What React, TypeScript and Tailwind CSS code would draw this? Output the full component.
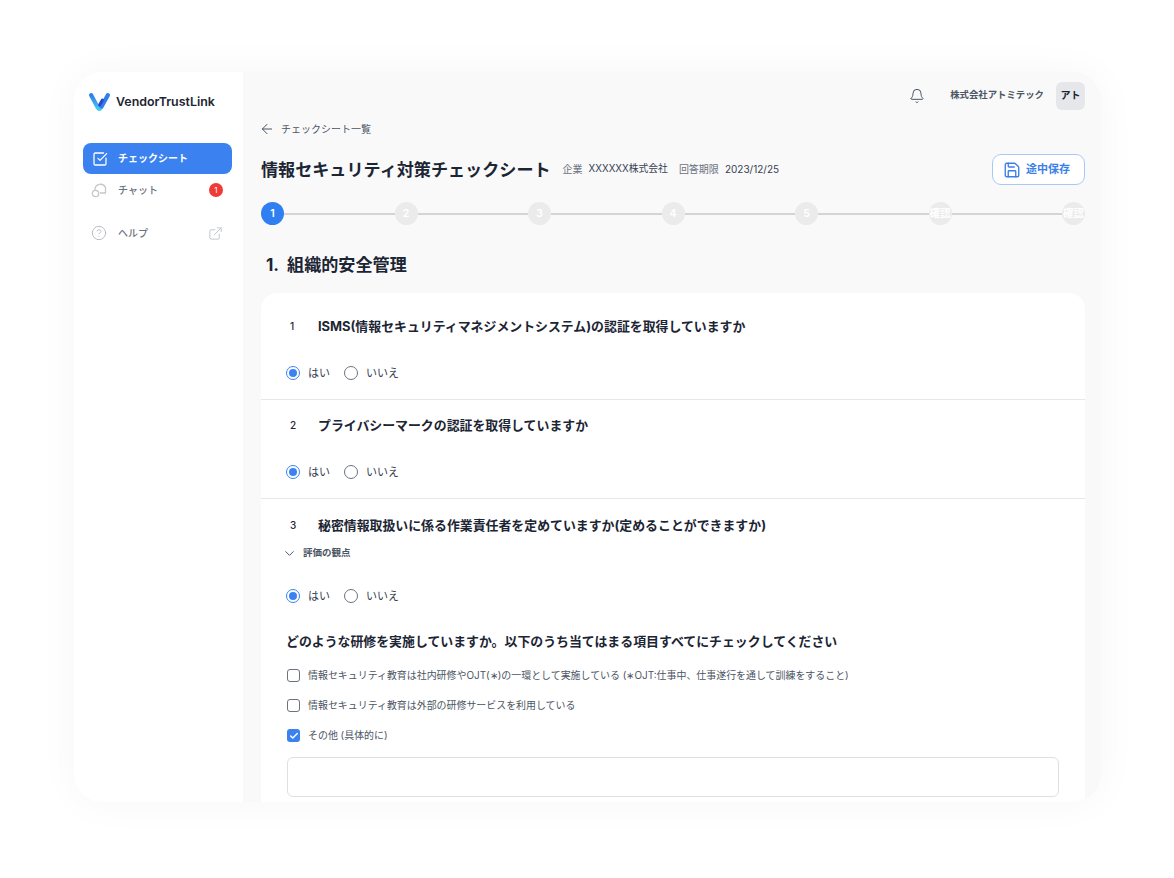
import { ArrowLeft, Bell, Check, ChevronDown, CircleHelp, ExternalLink, Save, SquareCheckBig } from "lucide-react";

const font = { fontFamily: '"Inter", "Noto Sans CJK JP", sans-serif' };

const steps = ["1", "2", "3", "4", "5", "確認", "確認"];

function Logo() {
  return (
    <svg width="21" height="19" viewBox="0 0 21 19" fill="none">
      <defs>
        <linearGradient id="vLeft" x1="0" y1="0" x2="0" y2="1">
          <stop offset="0" stopColor="#2f7fe8" />
          <stop offset="1" stopColor="#45c8f0" />
        </linearGradient>
      </defs>
      <path d="M2.2 2.2 L8.8 14.6 Q10.3 17 11.8 14.6" stroke="url(#vLeft)" strokeWidth="4.2" strokeLinecap="round" />
      <path d="M18.8 2.2 L12.6 13.4" stroke="#2f7fe8" strokeWidth="4.2" strokeLinecap="round" />
      <path d="M13.4 7 L10.6 12" stroke="#2a46d0" strokeWidth="3" strokeLinecap="round" />
    </svg>
  );
}

function ChatIcon() {
  return (
    <svg width="16" height="16" viewBox="0 0 16 16" fill="none" stroke="#c4c7cc" strokeWidth="1.3" strokeLinejoin="round">
      <path d="M4 8 A5.5 5.5 0 0 1 14.5 5.5 V11 H9" />
      <circle cx="4.5" cy="11.5" r="3.2" />
    </svg>
  );
}

function Radio({ label, checked }: { label: string; checked?: boolean }) {
  return (
    <div className="flex items-center gap-[8px]">
      <span className={`flex h-[14px] w-[14px] items-center justify-center rounded-full border ${checked ? "border-[#3b82f0]" : "border-[#6b7280]"} bg-white`}>
        {checked && <span className="h-2 w-2 rounded-full bg-[#3b82f0]" />}
      </span>
      <span className="text-[11px] text-[#374151]">{label}</span>
    </div>
  );
}

function YesNo() {
  return (
    <div className="flex items-center gap-[14px]">
      <Radio label="はい" checked />
      <Radio label="いいえ" />
    </div>
  );
}

function CheckRow({ label, checked }: { label: string; checked?: boolean }) {
  return (
    <div className="ml-[1px] flex h-5 items-center gap-[8px]">
      {checked ? (
        <span className="flex h-[13px] w-[13px] items-center justify-center rounded-[3px] bg-[#3b82f0]">
          <Check size={10} strokeWidth={3.5} className="text-white" />
        </span>
      ) : (
        <span className="h-[13px] w-[13px] rounded-[3px] border border-[#6b7280] bg-white" />
      )}
      <span className="text-[9.95px] text-[#4b5563]">{label}</span>
    </div>
  );
}

function Question({ no, title }: { no: number; title: string }) {
  return (
    <div className="flex items-center">
      <span className="w-[32px] pl-[4px] text-[10px] font-medium text-[#1c2533]">{no}</span>
      <h3 className="text-[12.9px] font-bold text-[#1c2533]">{title}</h3>
    </div>
  );
}

export default function App() {
  return (
    <div className="h-[878px] w-[1174px] overflow-hidden bg-white pl-[74px] pt-[72px]" style={font}>
      <div className="flex h-[730px] w-[1027px] overflow-hidden rounded-[28px] bg-[#f9f9fa] shadow-[0_0_40px_rgba(0,0,0,0.04)]">
        {/* Sidebar */}
        <aside className="w-[169px] shrink-0 bg-white px-[9px]">
          <div className="flex items-center gap-[6px] pl-[6px] pt-[21px]">
            <Logo />
            <span className="text-[12.4px] font-semibold text-[#1c2533]">VendorTrustLink</span>
          </div>
          <div className="mt-[31px] flex h-[31px] w-[149px] items-center gap-[10px] rounded-[8px] bg-[#3b82f0] pl-[9px] text-white">
            <SquareCheckBig size={16} strokeWidth={1.9} />
            <span className="text-[10px] font-bold">チェックシート</span>
          </div>
          <div className="flex h-[32px] w-[149px] items-center gap-[11px] pl-[8px]">
            <ChatIcon />
            <span className="text-[10px] font-medium text-[#6b7280]">チャット</span>
            <span className="ml-auto mr-[9px] flex h-[14px] w-[14px] items-center justify-center rounded-full bg-[#ef3b36] text-[8px] text-white">1</span>
          </div>
          <div className="mt-[11px] flex h-[32px] w-[149px] items-center gap-[11px] pl-[8px]">
            <CircleHelp size={16} strokeWidth={1.4} className="text-[#b5b8be]" />
            <span className="text-[10px] font-medium text-[#6b7280]">ヘルプ</span>
            <ExternalLink size={15} strokeWidth={1.6} className="ml-auto mr-[9px] text-[#c4c7cc]" />
          </div>
        </aside>

        {/* Main */}
        <main className="flex-1 pl-[18px] pr-[16px]">
          <div className="flex h-[47px] items-center justify-end">
            <Bell size={16} strokeWidth={1.5} className="text-[#4b5563]" />
            <span className="ml-[25px] text-[9.4px] font-semibold text-[#4b5563]">株式会社アトミテック</span>
            <span className="ml-[12px] flex h-[28px] w-[29px] items-center justify-center rounded-[6px] bg-[#e5e7eb] text-[10px] font-bold text-[#1c2533]">アト</span>
          </div>

          <div className="mt-[1px] flex h-[18px] items-center gap-[6px]">
            <ArrowLeft size={16} strokeWidth={1.5} className="-ml-[2px] text-[#4b5563]" />
            <span className="text-[10px] text-[#4b5563]">チェックシート一覧</span>
          </div>

          <div className="mt-[16px] flex h-[31px] items-center">
            <h1 className="text-[17.1px] font-bold text-[#1c2533]">情報セキュリティ対策チェックシート</h1>
            <span className="ml-[12px] text-[10px] text-[#6b7280]">企業</span>
            <span className="ml-[6px] text-[9.8px] text-[#374151]">XXXXXX株式会社</span>
            <span className="ml-[11px] text-[10px] text-[#6b7280]">回答期限</span>
            <span className="ml-[6px] text-[10px] text-[#374151]">2023/12/25</span>
            <button className="ml-auto flex h-[31px] w-[93px] items-center gap-[5px] rounded-[9px] border border-[#a9c8f5] bg-white pl-[10px] text-[11px] font-bold text-[#3b7fe8]">
              <Save size={18} strokeWidth={1.8} />
              途中保存
            </button>
          </div>

          {/* Stepper */}
          <div className="mt-[17px] flex items-center">
            {steps.map((s, i) => (
              <div key={i} className={`flex items-center ${i > 0 ? "flex-1" : ""}`}>
                {i > 0 && <div className="h-[2px] flex-1 bg-[#d4d4d8]" />}
                <span className={`flex h-[23px] w-[23px] shrink-0 items-center justify-center whitespace-nowrap rounded-full text-[10.5px] font-semibold ${i === 0 ? "bg-[#2f7ff0] text-white" : "bg-[#ebebeb] text-white"}`}>
                  {s}
                </span>
              </div>
            ))}
          </div>

          <h2 className="mt-[27px] flex gap-[8px] pl-[5px] text-[17.1px] font-bold text-[#1c2533]">
            <span>1.</span>
            <span>組織的安全管理</span>
          </h2>

          {/* Card */}
          <div className="mt-[15px] h-[600px] rounded-t-[16px] bg-white">
            <div className="h-[107px] border-b border-[#e5e7eb] px-[25px] pt-[24px]">
              <Question no={1} title="ISMS(情報セキュリティマネジメントシステム)の認証を取得していますか" />
              <div className="mt-[29px]"><YesNo /></div>
            </div>
            <div className="h-[99px] border-b border-[#e5e7eb] px-[25px] pt-[16px]">
              <Question no={2} title="プライバシーマークの認証を取得していますか" />
              <div className="mt-[29px]"><YesNo /></div>
            </div>
            <div className="px-[25px] pt-[17px]">
              <Question no={3} title="秘密情報取扱いに係る作業責任者を定めていますか(定めることができますか)" />
              <div className="-ml-[4px] mt-[11px] flex items-center gap-[6px] text-[9.5px] font-semibold text-[#4b5563]">
                <ChevronDown size={15} strokeWidth={1.6} />
                評価の観点
              </div>
              <div className="mt-[27px]"><YesNo /></div>
              <h3 className="mt-[27px] text-[12.9px] font-bold text-[#1c2533]">どのような研修を実施していますか。以下のうち当てはまる項目すべてにチェックしてください</h3>
              <div className="mt-[15px] flex flex-col gap-[10px]">
                <CheckRow label="情報セキュリティ教育は社内研修やOJT(∗)の一環として実施している (∗OJT:仕事中、仕事遂行を通して訓練をすること)" />
                <CheckRow label="情報セキュリティ教育は外部の研修サービスを利用している" />
                <CheckRow label="その他 (具体的に)" checked />
              </div>
              <div className="ml-[1px] mt-[11px] h-[40px] w-[772px] rounded-[6px] border border-[#e0e0e3] bg-white" />
            </div>
          </div>
        </main>
      </div>
    </div>
  );
}
